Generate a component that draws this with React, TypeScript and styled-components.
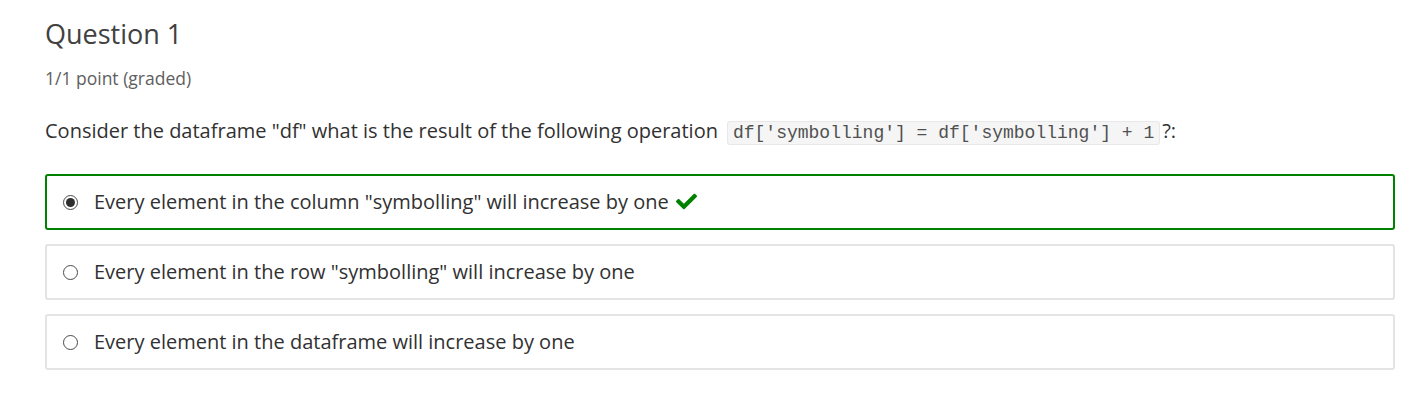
import styled, { createGlobalStyle } from "styled-components";
import { FaCheck } from "react-icons/fa";

const GlobalStyle = createGlobalStyle`
  body {
    margin: 0;
    background: #fff;
    font-family: "Open Sans", "Noto Sans", sans-serif;
  }
`;

const Page = styled.div`
  padding: 14px 26px 0 45px;
`;

const Title = styled.h2`
  margin: 0;
  font-size: 27px;
  font-weight: 400;
  line-height: 40px;
  color: #414141;
`;

const Grade = styled.div`
  margin-top: 12px;
  font-size: 17.5px;
  line-height: 24px;
  color: #5e5e5e;
`;

const Prompt = styled.p`
  margin: 26px 0 0;
  font-size: 20px;
  line-height: 30px;
  color: #313131;
`;

const Code = styled.code`
  font-family: "Liberation Mono", "DejaVu Sans Mono", monospace;
  font-size: 18px;
  background: #f5f5f5;
  border: 1px solid #e8e8e8;
  border-radius: 3px;
  padding: 1px 5px;
  margin: 0 2px 0 9px;
  color: #505050;
`;

const Options = styled.div`
  margin-top: 26px;
  display: flex;
  flex-direction: column;
  gap: 14px;
`;

const Option = styled.label<{ $correct?: boolean }>`
  display: flex;
  align-items: center;
  gap: 16px;
  padding: 13px 16px;
  border: 2px solid ${(p) => (p.$correct ? "#008100" : "#e4e4e4")};
  border-radius: 3px;
  font-size: 20px;
  line-height: 26px;
  color: #313131;
`;

const Radio = styled.span<{ $checked?: boolean }>`
  width: 15px;
  height: 15px;
  flex: none;
  border-radius: 50%;
  border: 1px solid #4a4a4a;
  box-sizing: border-box;
  display: grid;
  place-items: center;
  background: #fff;

  &::after {
    content: "";
    width: 9px;
    height: 9px;
    border-radius: 50%;
    background: ${(p) => (p.$checked ? "#2e2e2e" : "transparent")};
  }
`;

const Check = styled(FaCheck)`
  color: #008100;
  font-size: 21px;
  margin-left: 7px;
  vertical-align: -3px;
`;

const options = [
  { text: 'Every element in the column "symbolling" will increase by one', correct: true },
  { text: 'Every element in the row "symbolling" will increase by one', correct: false },
  { text: "Every element in the dataframe will increase by one", correct: false },
];

export default function App() {
  return (
    <>
      <GlobalStyle />
      <Page>
        <Title>Question 1</Title>
        <Grade>1/1 point (graded)</Grade>
        <Prompt>
          Consider the dataframe "df" what is the result of the following operation
          <Code>df['symbolling'] = df['symbolling'] + 1</Code>?:
        </Prompt>
        <Options>
          {options.map((o) => (
            <Option key={o.text} $correct={o.correct}>
              <Radio $checked={o.correct} />
              <span>
                {o.text}
                {o.correct && <Check />}
              </span>
            </Option>
          ))}
        </Options>
      </Page>
    </>
  );
}
